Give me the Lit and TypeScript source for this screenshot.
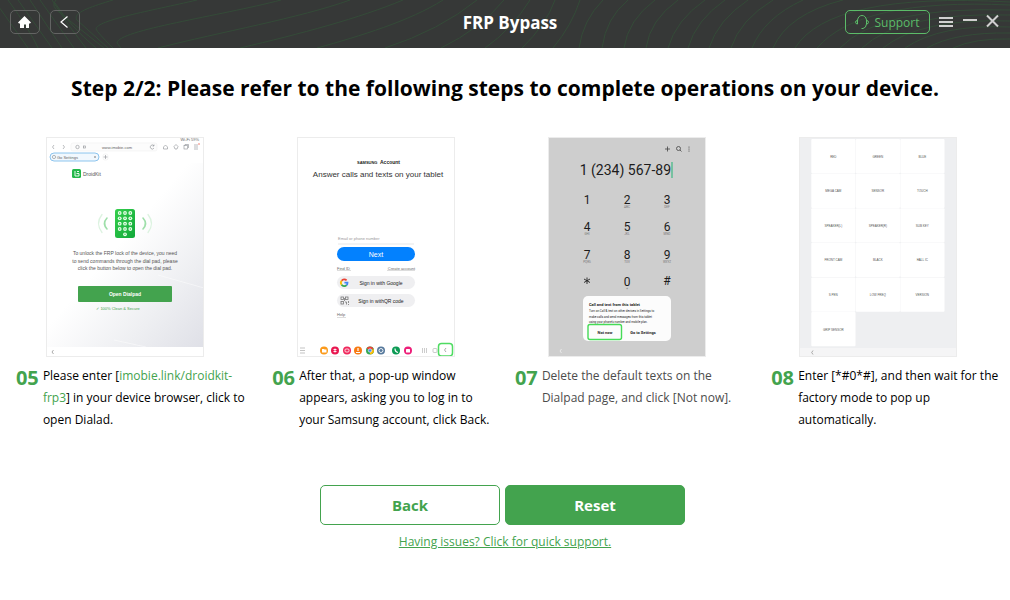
import { LitElement, html, svg, css, type TemplateResult } from "lit";
import { customElement } from "lit/decorators.js";
import { styleMap } from "lit/directives/style-map.js";

interface Step {
  num: string;
  text: TemplateResult;
  textWidth: number;
  muted?: boolean;
  art: TemplateResult;
}

/* Contour lines behind the title bar */
const contours = [
  "M-6 0L28 48", "M8 0Q30 30 38 48", "M18 0L52 48", "M30 0L62 48", "M40 0L74 48", "M52 0Q68 26 86 48", "M55 3Q70 26 96 48",
  "M56 0Q50 6 60 13L104 48", "M113 0C90 7 72 13 77 20L108 48", "M197 0C150 11 97 20 96 29Q97 32 113 48",
  "M281 0C220 16 118 30 117 43L121 48", "M350 0C300 18 220 32 158 48", "M403 0C360 18 300 34 240 48",
  "M443 0C410 21 360 36 317 48", "M477 0Q440 30 385 48", "M504 0Q480 29 441 48", "M530 0Q512 29 485 48",
  "M555 0Q546 25 522 48", "M580 0Q572 25 553 48", "M603 0Q583 20 579 48", "M628 0Q606 18 602 48",
  "M655 0Q628 20 624 48", "M678 0Q650 20 646 48", "M705 0Q676 20 668 48", "M725 0Q696 20 688 48",
  "M748 0Q718 20 709 48", "M773 0Q740 20 731 48", "M803 0Q764 18 752 48", "M843 0Q788 14 773 48",
  "M1010 2Q830 -8 795 48", "M1010 5Q860 -2 817 48", "M1010 10Q880 6 840 48", "M1010 15Q900 12 862 48",
  "M1010 21Q920 18 883 48", "M1010 27Q940 24 905 48", "M1010 33Q955 32 927 48", "M1010 39Q975 38 953 48",
];

const browserArt = svg`
  <defs>
    <linearGradient id="page" x1="0" y1="0" x2="1" y2="1">
      <stop offset="0.45" stop-color="#fff"/><stop offset="0.75" stop-color="#eeeff2"/><stop offset="1" stop-color="#dfe0e7"/>
    </linearGradient>
    <linearGradient id="pad" x1="0" y1="0" x2="1" y2="1">
      <stop offset="0" stop-color="#35cf4c"/><stop offset="1" stop-color="#11a83a"/>
    </linearGradient>
  </defs>
  <rect width="158" height="220" fill="#fff"/>
  <rect y="26" width="158" height="184" fill="url(#page)"/>
  <path d="M112 138L158 151M68 203L100 210" stroke="#fff" stroke-width="0.7" opacity="0.7"/>
  <g fill="none" stroke="#8c8f94" stroke-width="0.6">
    <rect x="25" y="6" width="86" height="8" rx="2" stroke="#f0f0f0" fill="#fcfcfc"/>
    <path d="M8 8L6.500 10L8 12M17 8L18.500 10L17 12"/>
    <circle cx="31.500" cy="10" r="1.700"/><rect x="37.500" y="9" width="2" height="2"/>
    <path d="M108 9A2 2 0 1 0 108 11M108 7.500V9H106.500"/>
    <path d="M117.500 10L119.500 8L121.500 10V12H117.500ZM128 9.500L130 7.500L132 9.500L131 12H129Z"/>
    <rect x="138" y="8.500" width="3.500" height="3.500"/><path d="M139 8.500V7.500H142.500V11"/>
    <path d="M148 8H152M148 10H152M148 12H152"/>
    <rect x="57" y="17" width="5" height="6" rx="2" stroke="#ececec"/><path d="M57.500 20H61.500M59.500 18V22"/>
  </g>
  <circle cx="153" cy="7" r="0.700" fill="#ef5340"/>
  <rect x="4" y="16" width="49" height="8" rx="4" fill="#f1f8fe" stroke="#72b6ea" stroke-width="0.8"/>
  <circle cx="8" cy="20" r="1.600" fill="none" stroke="#777" stroke-width="0.5"/>
  <path d="M48 19L50 21M50 19L48 21" stroke="#777" stroke-width="0.5"/>
  <text class="t4 mid" x="71" y="11.500">www.imobie.com</text>
  <text class="t4" x="11" y="21.500">Go Settings</text>
  <text class="t4 end" x="153" y="4">Wi-Fi 59%</text>
  <rect x="26" y="32" width="9" height="9" rx="1.500" fill="#23b84a"/>
  <path d="M29 34V39H33V36.500H30.500M31 34.500H33" fill="none" stroke="#fff" stroke-width="0.9"/>
  <text class="t5" x="37" y="39">DroidKit</text>
  <rect x="69" y="72" width="20" height="29" rx="2.500" fill="url(#pad)"/>
  <g fill="#e8ffe9">
    ${[76, 81.3, 86.7, 92].map((y) => [73.7, 79, 84.3].map((x) => svg`<circle cx=${x} cy=${y} r="1.900"/>`))}
    <circle cx="79" cy="97.300" r="1.900"/>
  </g>
  <g fill="#2fbc49">
    ${[76, 81.3, 86.7, 92, 97.3].map((y, i) => (i < 4 ? [73.7, 79, 84.3] : [79]).map((x) => svg`<rect x=${x - 0.5} y=${y - 0.7} width="1" height="1.400"/>`))}
  </g>
  <g fill="none" stroke-linecap="round">
    <path d="M61 81Q56 86.500 61 92M97 81Q102 86.500 97 92" stroke="#9fdfaa" stroke-width="1.600"/>
    <path d="M56 77.500Q49 86.500 56 95.500M102 77.500Q109 86.500 102 95.500" stroke="#dcf3e0" stroke-width="1.300"/>
  </g>
  <g class="t5 mid">
    <text x="79" y="117.500">To unlock the FRP lock of the device, you need</text>
    <text x="79" y="125.500">to send commands through the dial pad, please</text>
    <text x="79" y="132.500">click the button below to open the dial pad.</text>
  </g>
  <rect x="32" y="149" width="94" height="16" rx="1" fill="#43a34e"/>
  <text class="t5 mid bold white" x="79" y="159">Open Dialpad</text>
  <text class="t4 mid green" x="72" y="173">✓ 100% Clean &amp; Secure</text>
  <rect y="210" width="158" height="10" fill="#fff"/>
  <path d="M7.500 213L6 215L7.500 217" fill="none" stroke="#888" stroke-width="0.7"/>
`;

const dock: [number, string][] = [
  [27, "#fb9a1b"], [38, "#e91750"], [50, "#f0285c"], [61, "#f77a13"], [84, "#56799c"], [99, "#0d9b55"], [111, "#ed1e79"],
];

const accountArt = svg`
  <rect width="158" height="220" fill="#fff"/>
  <text class="t4 heavy ink" x="60" y="27">SAMSUNG</text>
  <text class="t5 bold ink" x="83" y="27">Account</text>
  <text class="t8 mid" x="81" y="40">Answer calls and texts on your tablet</text>
  <text class="t4 soft" x="41" y="103">Email or phone number</text>
  <path d="M41 107H117" stroke="#ddd" stroke-width="0.7"/>
  <rect x="40" y="110" width="78" height="14" rx="7" fill="#0381fe"/>
  <text class="t7 mid white" x="79" y="119.500">Next</text>
  <text class="t4" x="40" y="132.500">Find ID</text>
  <text class="t4 end" x="118" y="132.500">Create account</text>
  <path d="M40 133.500H54M90 133.500H118M40 180.500H49" stroke="#aaa" stroke-width="0.4"/>
  <rect x="40" y="139" width="78" height="13" rx="6.500" fill="#efeff1"/>
  <rect x="40" y="157" width="78" height="13" rx="6.500" fill="#efeff1"/>
  <g fill="none" stroke-width="1.800">
    <path d="M49.600 143.400A3.300 3.300 0 0 0 44.600 143.700" stroke="#ea4335"/>
    <path d="M44.600 143.700A3.300 3.300 0 0 0 44.600 147.700" stroke="#fbbc05"/>
    <path d="M44.600 147.700A3.300 3.300 0 0 0 49.600 148.100" stroke="#34a853"/>
    <path d="M49.600 148.100Q50.500 147.200 50.500 145.700H47.400" stroke="#4285f4"/>
  </g>
  <g fill="none" stroke="#777" stroke-width="0.8">
    <rect x="44" y="160" width="2.500" height="2.500"/><rect x="48.500" y="160" width="2.500" height="2.500"/>
    <rect x="44" y="164.500" width="2.500" height="2.500"/><path d="M48 165H49.500V167.500M51.500 164V166M51 167.500H52M47.500 161V164"/>
  </g>
  <text class="t5 mid ink" x="84" y="147.500">Sign in with Google</text>
  <text class="t5 mid ink" x="84" y="165.500">Sign in withQR code</text>
  <text class="t4" x="40" y="179">Help</text>
  <path d="M3 211H8M3 213.500H8M3 216H8" stroke="#aaa" stroke-width="0.7"/>
  ${dock.map(([x, fill]) => svg`<circle cx=${x} cy="213.500" r="4" fill=${fill}/>`)}
  <path d="M25 212H27L27.500 212.500H29.500V215.500H25Z" fill="#fff"/>
  <path d="M36.500 212.500H39.500M36.500 214.500H39.500M38 211.500V215.500" stroke="#fff" stroke-width="0.9"/>
  <rect x="48" y="212" width="4" height="3" rx="1" fill="none" stroke="#fff" stroke-width="0.8"/>
  <path d="M61 211V214M59 215.500H63" stroke="#fff" stroke-width="1.200"/>
  <circle cx="73" cy="213.500" r="4" fill="#34a853"/>
  <path d="M69.500 211.500A4 4 0 0 1 76.500 211.500L73 213.500Z" fill="#ea4335"/>
  <path d="M76.700 212A4 4 0 0 1 73 217.500V213.500Z" fill="#fbbc05"/>
  <circle cx="73" cy="213.500" r="1.700" fill="#4285f4" stroke="#fff" stroke-width="0.6"/>
  <circle cx="84" cy="213.500" r="2" fill="none" stroke="#fff" stroke-width="0.9"/>
  <path d="M98 211.500Q98 215 101 215.500" fill="none" stroke="#fff" stroke-width="1.200"/>
  <rect x="109" y="212" width="4" height="3.500" rx="0.500" fill="#fff"/>
  <path d="M125.500 211V216M127.500 211V216M129.500 211V216" stroke="#aaa" stroke-width="0.6"/>
  <rect x="136" y="211.500" width="4" height="4" rx="1" fill="none" stroke="#aaa" stroke-width="0.6"/>
  <rect x="141.500" y="206.500" width="14" height="12.500" rx="3" fill="#fff" stroke="#4fdc62" stroke-width="1.500"/>
  <path d="M149 211L147.500 213L149 215" fill="none" stroke="#888" stroke-width="0.7"/>
`;

const keys: [number, number, string, string][] = [
  [39, 63, "1", ""], [79, 63, "2", "ABC"], [119, 63, "3", "DEF"],
  [39, 90, "4", "GHI"], [79, 90, "5", "JKL"], [119, 90, "6", "MNO"],
  [39, 118, "7", "PQRS"], [79, 118, "8", "TUV"], [119, 118, "9", "WXYZ"],
  [79, 145, "0", "+"], [119, 144, "#", ""],
];

const dialArt = svg`
  <rect width="158" height="220" fill="#cecece"/>
  <g fill="none" stroke="#444" stroke-width="0.8">
    <path d="M117 12H122M119.500 9.500V14.500"/><circle cx="130.500" cy="11.500" r="2"/><path d="M132 13L133.500 14.500"/>
  </g>
  <g fill="#444"><circle cx="141" cy="10" r="0.600"/><circle cx="141" cy="12" r="0.600"/><circle cx="141" cy="14" r="0.600"/></g>
  <text class="dial t14 end" x="123" y="38">1 (234) 567-89</text>
  <path d="M124 25V41" stroke="#3db983" stroke-width="1.200"/>
  ${keys.map(([x, y, key, sub]) => svg`
    <text class="dial t12 mid" x=${x} y=${y + 4}>${key}</text>
    <text class="dial t3 mid dim" x=${x} y=${y + 8}>${sub}</text>`)}
  <path d="M39 140.500V147M36 142L42 145.500M42 142L36 145.500" stroke="#222" stroke-width="0.9"/>
  <rect x="35" y="159" width="88" height="45" rx="5" fill="#fcfcfc"/>
  <text class="dial t4 bold" x="41" y="168.500">Call and text from this tablet</text>
  <g class="dial t3">
    <text x="41" y="175">Turn on Call &amp; text on other devices in Settings to</text>
    <text x="41" y="180.500">make calls and send messages from this tablet</text>
    <text x="41" y="186">using your phone's number and mobile plan.</text>
  </g>
  <rect x="40" y="187.500" width="33.500" height="15" rx="2" fill="#fcfcfc" stroke="#46db57" stroke-width="1.400"/>
  <text class="dial t4 bold mid" x="57" y="196.500">Not now</text>
  <text class="dial t4 bold mid" x="95" y="196.500">Go to Settings</text>
  <path d="M13.500 212L12 214L13.500 216" fill="none" stroke="#f5f5f5" stroke-width="0.7"/>
`;

const tests = [
  "RED", "GREEN", "BLUE", "MEGA CAM", "SENSOR", "TOUCH", "SPEAKER(L)", "SPEAKER(R)", "SUB KEY",
  "FRONT CAM", "BLACK", "HALL IC", "S PEN", "LOW FREQ", "VERSION", "GRIP SENSOR",
];

const factoryArt = svg`
  <rect width="158" height="220" fill="#eeeff1"/>
  ${tests.map((label, i) => {
    const x = 12.3 + (i % 3) * 44.5;
    const y = 2 + Math.floor(i / 3) * 34.6;
    return svg`<rect x=${x} y=${y} width="44.200" height="34.300" rx="1" fill="#fff"/>
      <text class="t3 mid" x=${x + 22} y=${y + 18.5}>${label}</text>`;
  })}
  <rect y="211" width="158" height="9" fill="#f5f5f6"/>
  <path d="M14 213.500L12.700 215.500L14 217.500" fill="none" stroke="#888" stroke-width="0.7"/>
`;

@customElement("step-card")
class StepCard extends LitElement {
  static properties = { step: { attribute: false } };
  declare step: Step;

  static styles = css`
    :host { display: flex; flex-direction: column; align-items: center; gap: 8px; }
    .art { display: block; width: 158px; height: 220px; overflow: hidden; font-family: "Liberation Sans", sans-serif; }
    .frame { fill: none; stroke: #ececec; }
    .t3 { font-size: 3px; fill: #555; }
    .t4 { font-size: 4px; fill: #666; }
    .t5 { font-size: 5px; fill: #555; }
    .t7 { font-size: 7px; }
    .t8 { font-size: 8px; fill: #333; }
    .t12 { font-size: 12px; }
    .t14 { font-size: 14px; }
    .dial { font-family: Roboto, sans-serif; fill: #1c1c1c; }
    .mid { text-anchor: middle; }
    .end { text-anchor: end; }
    .bold { font-weight: 700; }
    .heavy { font-weight: 900; }
    .ink { fill: #222; }
    .soft { fill: #999; }
    .dim { fill: #777; }
    .white { fill: #fff; }
    .green { fill: #43a34e; }
    .caption { display: flex; gap: 4px; }
    .num { flex: none; width: 23px; color: #43a34e; font-size: 20px; font-weight: 700; line-height: 26px; }
    .body { flex: none; }
    .text { margin: 0 -16px 0 0; font-size: 12px; line-height: 22px; color: #000; }
    .muted { color: #4c4c4c; }
    a { color: #43a34e; text-decoration: none; }
  `;

  render() {
    const s = this.step;
    return html`
      <svg class="art" viewBox="0 0 158 220" role="img" aria-label="Step ${s.num}">
        ${s.art}
        <rect class="frame" x="0.500" y="0.500" width="157" height="219" />
      </svg>
      <div class="caption">
        <span class="num">${s.num}</span>
        <div class="body" style=${styleMap({ width: `${s.textWidth}px` })}>
          <p class="text ${s.muted ? "muted" : ""}">${s.text}</p>
        </div>
      </div>
    `;
  }
}

@customElement("app-root")
class AppRoot extends LitElement {
  static styles = css`
    :host { display: block; min-height: 100vh; background: #fff; font-family: "Open Sans", "Noto Sans", sans-serif; color: #000; }
    * { box-sizing: border-box; }
    button { font: inherit; margin: 0; padding: 0; cursor: pointer; background: none; border: 0; }
    .bar {
      position: relative; display: grid; grid-template-columns: 1fr auto 1fr; align-items: start;
      height: 48px; padding: 10px 0 0 10px; background: #363837; overflow: hidden;
    }
    .contours { position: absolute; inset: 0; width: 100%; height: 100%; fill: none; stroke: #344b38; }
    .nav, .tools { position: relative; display: flex; align-items: center; }
    .nav { gap: 10px; }
    .tools { justify-content: flex-end; gap: 8px; padding-right: 10px; }
    .square { display: grid; place-items: center; width: 30px; height: 24px; border: 1px solid #636463; border-radius: 5px; }
    .title { position: relative; margin: 0; font-size: 17px; line-height: 25px; font-weight: 700; color: #fff; }
    .support {
      display: flex; align-items: center; justify-content: center; gap: 5px; width: 85px; height: 24px;
      border: 1px solid #5cbc69; border-radius: 5px; color: #5cbc69; font-size: 12px;
    }
    .tool { display: grid; place-items: center; height: 24px; }
    svg { display: block; }
    .heading { margin: 0; padding: 24px 16px 0; text-align: center; font-size: 21px; line-height: 32px; font-weight: 700; }
    .steps { display: grid; grid-template-columns: repeat(4, 1fr); margin: 0; padding: 33px 7px 0 0; list-style: none; }
    .actions { display: flex; justify-content: center; gap: 5px; padding: 54px 5px 0 0; }
    .action { width: 180px; height: 40px; border: 1px solid #43a34e; border-radius: 5px; color: #43a34e; font-size: 15px; font-weight: 700; }
    .primary { background: #43a34e; color: #fff; }
    .help { margin: 0; padding: 6px 0 24px; text-align: center; font-size: 12px; line-height: 22px; }
    .help a { color: #43a34e; }
  `;

  private steps: Step[] = [
    {
      num: "05", textWidth: 192, art: browserArt,
      text: html`Please enter [<a href="#frp3">imobie.link/droidkit-frp3</a>] in your device browser, click to open Dialad.`,
    },
    { num: "06", textWidth: 181, art: accountArt, text: html`After that, a pop-up window appears, asking you to log in to your Samsung account, click Back.` },
    { num: "07", textWidth: 197, art: dialArt, muted: true, text: html`Delete the default texts on the Dialpad page, and click [Not now].` },
    { num: "08", textWidth: 186, art: factoryArt, text: html`Enter [*#0*#], and then wait for the factory mode to pop up automatically.` },
  ];

  render() {
    return html`
      <header class="bar">
        <svg class="contours" viewBox="0 0 1010 48" preserveAspectRatio="xMidYMid slice" aria-hidden="true">
          ${contours.map((d) => svg`<path d=${d}/>`)}
        </svg>
        <nav class="nav">
          <button class="square" aria-label="Home">
            <svg width="14" height="12" viewBox="0 0 14 12"><path d="M6.500 0L13 6.500L12 7.500H11V12H8V8.500H6V12H2V7.500H1L0 6.500Z" fill="#fff"/></svg>
          </button>
          <button class="square" aria-label="Previous">
            <svg width="10" height="12" viewBox="0 0 10 12"><path d="M7.500 0.500L1 6L7.500 11.500" fill="none" stroke="#fff" stroke-width="1.200"/></svg>
          </button>
        </nav>
        <h1 class="title">FRP Bypass</h1>
        <div class="tools">
          <button class="support">
            <svg width="14" height="14" viewBox="0 0 14 14" fill="none" stroke="#5cbc69" stroke-width="1">
              <path d="M2.500 9V5Q3.500 0.500 7 0.500T11.500 5V9Q11 13 8 13.500H6.500"/>
              <path d="M2.500 5.500Q0.500 5.500 0.500 7.200T2.500 9M11.500 5.500Q13.500 5.500 13.500 7.200T11.500 9"/>
            </svg>
            Support
          </button>
          <button class="tool" aria-label="Menu">
            <svg width="16" height="12" viewBox="0 0 16 12"><path d="M1 2H15M1 6H15M1 10H15" stroke="#d0d0d0" stroke-width="2"/></svg>
          </button>
          <button class="tool" aria-label="Minimize">
            <svg width="16" height="16" viewBox="0 0 16 16"><path d="M1 6H15" stroke="#d0d0d0" stroke-width="2"/></svg>
          </button>
          <button class="tool" aria-label="Close">
            <svg width="14" height="16" viewBox="0 0 14 16"><path d="M1 1.500L12 12.500M12 1.500L1 12.500" stroke="#d0d0d0" stroke-width="2"/></svg>
          </button>
        </div>
      </header>
      <main>
        <h2 class="heading">Step 2/2: Please refer to the following steps to complete operations on your device.</h2>
        <ol class="steps">
          ${this.steps.map((step) => html`<li><step-card .step=${step}></step-card></li>`)}
        </ol>
        <div class="actions">
          <button class="action">Back</button>
          <button class="action primary">Reset</button>
        </div>
        <p class="help"><a href="#support">Having issues? Click for quick support.</a></p>
      </main>
    `;
  }
}
